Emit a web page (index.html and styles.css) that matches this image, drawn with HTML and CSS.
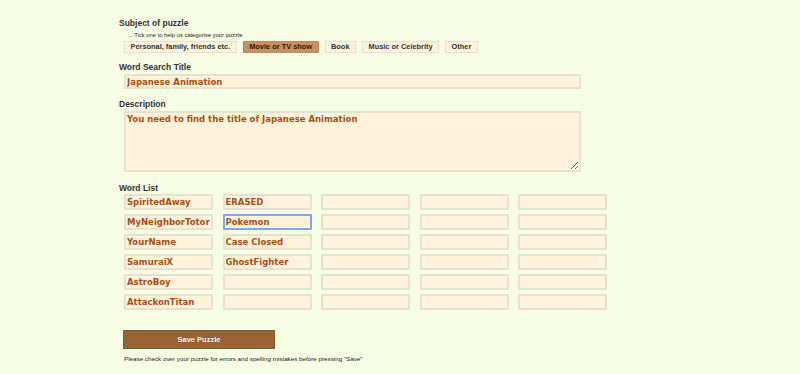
FILE: index.html
```html
<!DOCTYPE html>
<html lang="en">
<head>
  <meta charset="UTF-8">
  <meta name="viewport" content="width=device-width, initial-scale=1.0">
  <title>Create a Word Search</title>

  <link rel="stylesheet" href="styles.css">
</head>

<body>
  <form class="puzzle-form" id="puzzle-form">
    <p class="field-label">Subject of puzzle</p>
    <p class="hint">... Tick one to help us categorise your puzzle</p>
    <div class="subjects">
      <button type="button" class="subject">Personal, family, friends etc.</button>
      <button type="button" class="subject selected">Movie or TV show</button>
      <button type="button" class="subject">Book</button>
      <button type="button" class="subject">Music or Celebrity</button>
      <button type="button" class="subject">Other</button>
    </div>

    <p class="field-label gap-title">Word Search Title</p>
    <input type="text" class="field title-input" value="Japanese Animation" />

    <p class="field-label gap-desc">Description</p>
    <textarea class="field desc-input">You need to find the title of Japanese Animation</textarea>

    <p class="field-label gap-words">Word List</p>
    <div class="word-grid">
      <input type="text" class="field word" value="SpiritedAway" />
      <input type="text" class="field word" value="ERASED" />
      <input type="text" class="field word" />
      <input type="text" class="field word" />
      <input type="text" class="field word" />

      <input type="text" class="field word" value="MyNeighborTotoro" />
      <input type="text" class="field word focused" value="Pokemon" />
      <input type="text" class="field word" />
      <input type="text" class="field word" />
      <input type="text" class="field word" />

      <input type="text" class="field word" value="YourName" />
      <input type="text" class="field word" value="Case Closed" />
      <input type="text" class="field word" />
      <input type="text" class="field word" />
      <input type="text" class="field word" />

      <input type="text" class="field word" value="SamuraiX" />
      <input type="text" class="field word" value="GhostFighter" />
      <input type="text" class="field word" />
      <input type="text" class="field word" />
      <input type="text" class="field word" />

      <input type="text" class="field word" value="AstroBoy" />
      <input type="text" class="field word" />
      <input type="text" class="field word" />
      <input type="text" class="field word" />
      <input type="text" class="field word" />

      <input type="text" class="field word" value="AttackonTitan" />
      <input type="text" class="field word" />
      <input type="text" class="field word" />
      <input type="text" class="field word" />
      <input type="text" class="field word" />
    </div>

    <button type="submit" class="save-btn">Save Puzzle</button>
    <p class="note">Please check over your puzzle for errors and spelling mistakes before pressing "Save"</p>
  </form>
</body>
</html>
```

FILE: styles.css
```css
body {
  margin: 0;
  padding: 0;
  background-color: #f6fde3;
  font-family: "Liberation Sans", Arial, sans-serif;
  color: #333;
}

.puzzle-form {
  padding: 18px 0 0 119px;
}

.field-label {
  margin: 0;
  font-weight: bold;
  font-size: 8.5px;
  line-height: 10px;
  color: #333;
}

.hint {
  margin: 3px 0 0 9px;
  font-size: 5.8px;
  line-height: 8px;
  color: #222;
}

.subjects {
  display: flex;
  gap: 6px;
  margin: 2px 0 0 5px;
}

.subject {
  height: 12px;
  padding: 0 5.5px;
  font-family: "Liberation Sans", Arial, sans-serif;
  font-weight: bold;
  font-size: 7.4px;
  line-height: 8px;
  color: #333;
  background-color: #fff3dc;
  border: 1px solid #e6e1cc;
  border-radius: 0;
  cursor: pointer;
}

.subject.selected {
  background-color: #c98f63;
  border-color: #b88a66;
  color: #2a1a10;
}

.field {
  display: block;
  box-sizing: border-box;
  margin: 0;
  padding: 0 1px;
  font-family: "DejaVu Sans", Verdana, sans-serif;
  font-weight: bold;
  font-size: 8.5px;
  color: #a64f14;
  background-color: #fff3dc;
  border: 2px solid #e6e2d0;
  border-radius: 1px;
  outline: none;
}

.gap-title { margin-top: 9px; }
.gap-desc { margin-top: 10px; }
.gap-words { margin-top: 11px; }

.title-input {
  width: 457px;
  height: 15px;
  margin: 2px 0 0 5px;
}

.desc-input {
  width: 457px;
  height: 61px;
  margin: 2px 0 0 5px;
  padding: 1px 1px;
  line-height: 11px;
}

.word-grid {
  display: grid;
  grid-template-columns: repeat(5, 89px);
  column-gap: 9.5px;
  row-gap: 4px;
  margin: 1px 0 0 5px;
}

.word {
  width: 89px;
  height: 16px;
}

.word.focused {
  border-color: #7ca7e8;
}

.save-btn {
  display: block;
  width: 152px;
  height: 19px;
  margin: 20px 0 0 4px;
  font-family: "Liberation Sans", Arial, sans-serif;
  font-weight: bold;
  font-size: 7.5px;
  color: #fff;
  text-shadow: 0 0 1px #5a3a20;
  background-color: #9b6233;
  border: 1px solid #6f5c4b;
  border-radius: 0;
  cursor: pointer;
}

.note {
  margin: 6px 0 0 5px;
  font-size: 6.25px;
  line-height: 8px;
  color: #222;
}
```
